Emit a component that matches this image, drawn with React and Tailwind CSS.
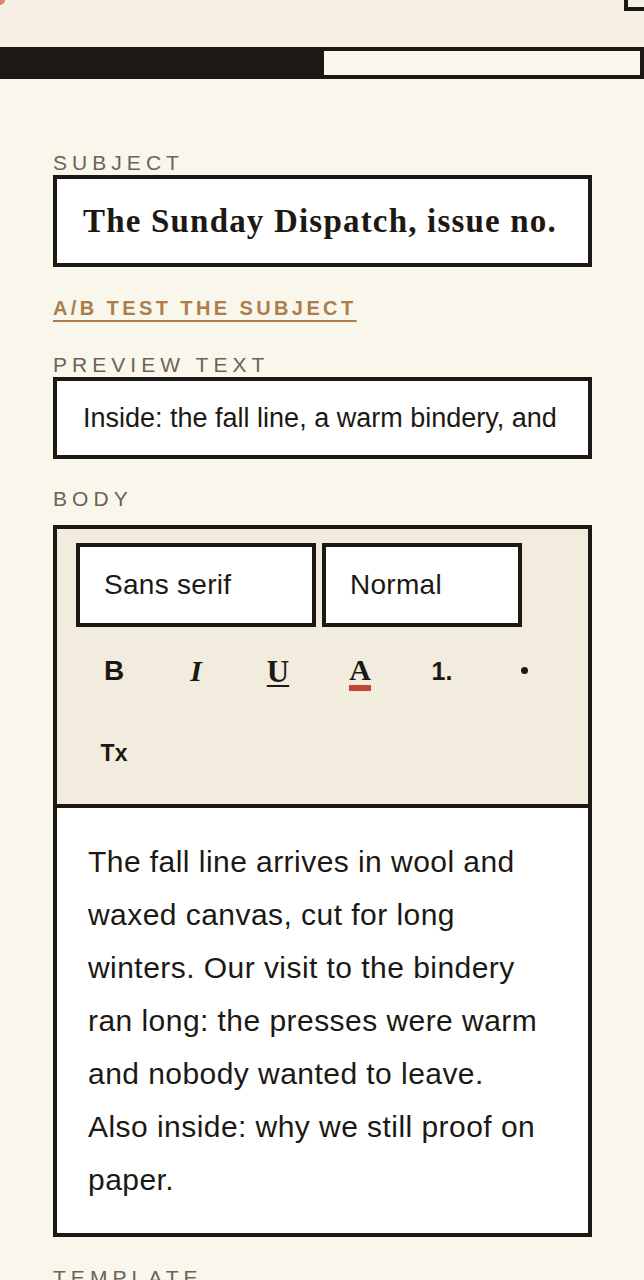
import React from "react";

const ink = "text-[#1c1914]";

const Label = ({ children, className = "" }) => (
  <div
    className={`font-['Liberation_Sans',Arial,sans-serif] text-[21px] leading-none tracking-[0.24em] uppercase text-[#6b6358] ${className}`}
  >
    {children}
  </div>
);

const ToolButton = ({ children }) => (
  <button className={`w-[76px] h-[76px] flex items-center justify-center ${ink}`}>
    {children}
  </button>
);

const App = () => {
  return (
    <div className="min-h-[1280px] bg-[#f9f6ec] font-['Liberation_Sans',Arial,sans-serif]">
      {/* top strip */}
      <div className="h-[47px] bg-[#f5efe4] flex justify-between items-start">
        <div className="w-[5px] h-[5px] rounded-br-full bg-[#d0553c] opacity-70" />
        <div className="w-[20px] h-[11px] border-l-4 border-b-4 border-[#1c1914]" />
      </div>

      {/* progress */}
      <div className="h-[32px] flex border-4 border-[#1c1914] bg-[#1c1914]">
        <div className="w-[320px]" />
        <div className="flex-1 bg-[#faf7ec]" />
      </div>

      <div className="pl-[53px] pr-[52px]">
        <Label className="mt-[73px]">Subject</Label>
        <div className="mt-[2px] h-[92px] border-4 border-[#1c1914] bg-white flex items-center px-[26px]">
          <div className="overflow-hidden whitespace-nowrap font-['Liberation_Serif',serif] font-bold text-[33px] tracking-[0.036em] text-[#1c1914] translate-y-[1px]">
            The Sunday Dispatch, issue no. 142
          </div>
        </div>

        <a
          href="#"
          className="inline-block mt-[31px] text-[20px] leading-none font-bold uppercase tracking-[0.17em] text-[#ad7d4c] underline decoration-2 underline-offset-[5px]"
        >
          A/B test the subject
        </a>

        <Label className="mt-[32px]">Preview text</Label>
        <div className="mt-[2px] h-[82px] border-4 border-[#1c1914] bg-white flex items-center px-[26px]">
          <div className="overflow-hidden whitespace-nowrap text-[27px] text-[#1c1914]">
            Inside: the fall line, a warm bindery, and why we still proof on paper.
          </div>
        </div>

        <Label className="mt-[29px]">Body</Label>
        <div className="mt-[16px] border-4 border-[#1c1914]">
          {/* toolbar */}
          <div className="bg-[#f2ecdf] border-b-4 border-[#1c1914] pt-[14px] pb-[13px] pl-[19px] pr-[19px] flex flex-wrap gap-[6px]">
            <div className="w-[240px] h-[84px] border-4 border-[#1c1914] bg-white flex items-center pl-[24px] text-[28px] tracking-[0.01em] text-[#1c1914]">
              Sans serif
            </div>
            <div className="w-[200px] h-[84px] border-4 border-[#1c1914] bg-white flex items-center pl-[24px] text-[28px] tracking-[0.01em] text-[#1c1914]">
              Normal
            </div>
            <ToolButton>
              <span className="text-[28px] font-bold leading-none">B</span>
            </ToolButton>
            <ToolButton>
              <span className="font-['Liberation_Serif',serif] italic font-bold text-[30px] leading-none">I</span>
            </ToolButton>
            <ToolButton>
              <span className="font-['Liberation_Serif',serif] font-bold text-[31px] leading-none underline decoration-2 underline-offset-[3px]">
                U
              </span>
            </ToolButton>
            <ToolButton>
              <span className="flex flex-col items-center pt-[4px]">
                <span className="font-['Liberation_Serif',serif] font-bold text-[30px] leading-none">A</span>
                <span className="w-[22px] h-[6px] bg-[#c4432f]" />
              </span>
            </ToolButton>
            <ToolButton>
              <span className="text-[25px] font-bold leading-none">1.</span>
            </ToolButton>
            <ToolButton>
              <span className="w-[7px] h-[7px] rounded-full bg-[#1c1914] -translate-y-[1px]" />
            </ToolButton>
            <ToolButton>
              <span className="text-[23px] font-bold leading-none">Tx</span>
            </ToolButton>
          </div>

          {/* content */}
          <div className="bg-white pt-[27px] pb-[27px] pl-[31px] pr-[40px] text-[30px] leading-[53px] tracking-[0.015em] text-[#1c1914]">
            The fall line arrives in wool and waxed canvas, cut for long winters. Our visit to the
            bindery ran long: the presses were warm and nobody wanted to leave. Also inside: why we
            still proof on paper.
          </div>
        </div>

        <Label className="mt-[30px] pb-[20px]">Template</Label>
      </div>
    </div>
  );
};

export default App;
